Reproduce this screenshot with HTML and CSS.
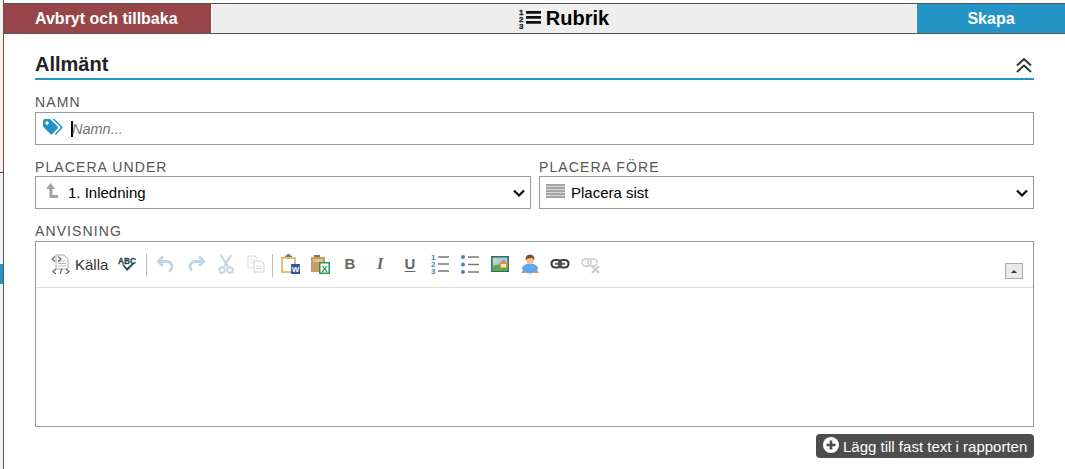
FILE: index.html
```html
<!DOCTYPE html>
<html lang="sv">
<head>
<meta charset="utf-8">
<title>Rubrik</title>
<link rel="stylesheet" href="styles.css">
</head>
<body>
<div class="page">
  <div class="strip">
    <div class="strip-peach"></div>
    <div class="strip-gray"></div>
    <div class="strip-blue"></div>
    <div class="strip-rest"></div>
  </div>
  <main class="main">
    <header class="topbar">
      <button class="top-btn cancel">Avbryt och tillbaka</button>
      <div class="title">
        <svg class="title-icon" width="22" height="22" viewBox="0 0 22 22">
          <text x="0" y="7" class="num heavy">1</text>
          <text x="0" y="14" class="num heavy">2</text>
          <text x="0" y="21" class="num heavy">3</text>
          <path d="M7 3h15v2.700H7zM7 8h15v2.700H7zM7 13h15v2.700H7z" fill="#111"/>
        </svg>
        <span>Rubrik</span>
      </div>
      <button class="top-btn create">Skapa</button>
    </header>
    <div class="content">
      <div class="section-head">
        <h2>Allmänt</h2>
        <svg class="collapse" width="18" height="16" viewBox="0 0 18 16">
          <path d="M2 8.500l7-6.500 7 6.500M2 15l7-6.500 7 6.500" fill="none" stroke="#333" stroke-width="2"/>
        </svg>
      </div>
      <label class="label">NAMN</label>
      <div class="name-field">
        <svg class="tag" width="20" height="17" viewBox="0 0 20 17">
          <path d="M0 1.500Q0 0 1.500 0H7l7.600 7.600q1 1 0 2L9.400 15q-1 1-2 0L0 7.400zM4 2.300a1.700 1.700 0 1 0 .01 0z" fill="#2494c7" fill-rule="evenodd"/>
          <path d="M9.500 0h2l7.600 7.600q1 1 0 2L13.800 15q-1 1-2.200.3L17 9.600q.9-1 0-2z" fill="#2494c7"/>
        </svg>
        <span class="caret"></span>
        <input class="name-input" type="text" placeholder="Namn...">
      </div>
      <div class="two-col">
        <div class="col">
          <label class="label">PLACERA UNDER</label>
          <div class="select-wrap under">
            <svg class="select-icon arrow-icon" width="12" height="15" viewBox="0 0 12 15">
              <path d="M4.500 0L9 6H6.500v6H12v3H3.500V6H0z" fill="#a3a39c"/>
            </svg>
            <select class="select"><option>1. Inledning</option></select>
            <svg class="chevron" width="12" height="8" viewBox="0 0 12 8">
              <path d="M1 1.500l5 5 5-5" fill="none" stroke="#111" stroke-width="2.200"/>
            </svg>
          </div>
        </div>
        <div class="col">
          <label class="label">PLACERA FÖRE</label>
          <div class="select-wrap before">
            <svg class="select-icon lines-icon" width="19" height="14" viewBox="0 0 19 14">
              <path d="M0 0h19v14H0z" fill="#d8d8d8"/>
              <path d="M0 0h19v2H0zM0 3h19v2H0zM0 6h19v2H0zM0 9h19v2H0zM0 12h19v2H0z" fill="#a4a4a4"/>
            </svg>
            <select class="select"><option>Placera sist</option></select>
            <svg class="chevron" width="12" height="8" viewBox="0 0 12 8">
              <path d="M1 1.500l5 5 5-5" fill="none" stroke="#111" stroke-width="2.200"/>
            </svg>
          </div>
        </div>
      </div>
      <label class="label">ANVISNING</label>
      <div class="editor">
        <div class="toolbar">
          <div class="tool-source">
            <svg width="20" height="20" viewBox="0 0 20 20">
              <path d="M5 1h8l4 4v10H5z" fill="#fff" stroke="#aaa"/>
              <path d="M7 7h8M7 9.500h8M7 12h8" stroke="#bbb"/>
              <path d="M4 2.500L1 5l3 2.500M7 2.500l3 2.500-3 2.500M5 15l-3 2.500L5 20M15 15l3 2.500-3 2.500M11 14.500L9 20" fill="none" stroke="#666" stroke-width="1.200"/>
            </svg>
            <span>Källa</span>
          </div>
          <div class="tool">
            <svg class="abc-icon" width="20" height="20" viewBox="0 0 20 20">
              <text x="1" y="9.500" class="abc" textLength="18" lengthAdjust="spacingAndGlyphs">ABC</text>
              <path d="M5 10.500l5 6.500 7-7-1.800-.5-5.200 4.500-3.200-3.500z" fill="#24484a"/>
            </svg>
          </div>
          <span class="sep first"></span>
          <div class="tool">
            <svg width="20" height="20" viewBox="0 0 20 20">
              <path d="M7 2.500L2 7.500 7 12" fill="none" stroke="#bfd4e6" stroke-width="2.600"/>
              <path d="M3 7.500h8a5 5 0 0 1 5 5 6 6 0 0 1-3 5" fill="none" stroke="#bfd4e6" stroke-width="2.800"/>
            </svg>
          </div>
          <div class="tool">
            <svg width="20" height="20" viewBox="0 0 20 20">
              <path d="M13 2.500l5 5L13 12" fill="none" stroke="#bfd4e6" stroke-width="2.600"/>
              <path d="M17 7.500H9a5 5 0 0 0-5 5 6 6 0 0 0 2 4" fill="none" stroke="#bfd4e6" stroke-width="2.800"/>
            </svg>
          </div>
          <div class="tool">
            <svg width="20" height="20" viewBox="0 0 20 20">
              <path d="M5 1l7 12M15 1L8 13" stroke="#cfd6dc" stroke-width="2.400"/>
              <circle cx="6" cy="16" r="2.800" fill="none" stroke="#c3d6e6" stroke-width="1.900"/>
              <circle cx="14" cy="16" r="2.800" fill="none" stroke="#c3d6e6" stroke-width="1.900"/>
            </svg>
          </div>
          <div class="tool">
            <svg width="20" height="20" viewBox="0 0 20 20">
              <path d="M2 2h7l2 2v10H2z" fill="#fff" stroke="#d5dadf"/>
              <path d="M8 7h7l3 3v8H8z" fill="#fff" stroke="#cdd3d9"/>
              <path d="M4 6h4M4 9h3M10 12h6M10 14.500h6" stroke="#d8dde2"/>
            </svg>
          </div>
          <span class="sep second"></span>
          <div class="tool">
            <svg width="20" height="20" viewBox="0 0 20 20">
              <path d="M1 3h15v16H1z" fill="#e6bc7c"/>
              <path d="M3 5h11v12H3z" fill="#fff"/>
              <path d="M5 3h7V1.500H10V0H7v1.500H5z" fill="#7a7a7a"/>
              <path d="M11 10h9v10h-9z" fill="#2c5aa0"/>
              <text x="15.500" y="18" class="mini">W</text>
            </svg>
          </div>
          <div class="tool">
            <svg width="20" height="20" viewBox="0 0 20 20">
              <path d="M1 3h14v15H1z" fill="#c99b62"/>
              <path d="M4 3h6V1H4z" fill="#8c7250"/>
              <path d="M3 5h10v3H3z" fill="#e3c08e"/>
              <path d="M9 8h11v12H9z" fill="#1e9a50"/>
              <path d="M10.500 9.500h8v9h-8z" fill="#fff"/>
              <text x="14.500" y="17.500" class="mini excel">X</text>
            </svg>
          </div>
          <div class="tool"><span class="fmt bold">B</span></div>
          <div class="tool"><span class="fmt italic">I</span></div>
          <div class="tool"><span class="fmt underline">U</span></div>
          <div class="tool">
            <svg width="20" height="22" viewBox="0 0 20 22">
              <text x="1" y="7" class="num blue">1</text>
              <text x="1" y="14" class="num blue">2</text>
              <text x="1" y="21" class="num blue">3</text>
              <path d="M8 4h11M8 11h11M8 18h11" stroke="#777" stroke-width="1.300"/>
            </svg>
          </div>
          <div class="tool">
            <svg width="20" height="20" viewBox="0 0 20 20">
              <circle cx="3" cy="3" r="2" fill="#4d80b8"/>
              <circle cx="3" cy="10.500" r="2" fill="#4d80b8"/>
              <circle cx="3" cy="18" r="2" fill="#4d80b8"/>
              <path d="M8 3h11M8 10.500h11M8 18h11" stroke="#777" stroke-width="1.300"/>
            </svg>
          </div>
          <div class="tool">
            <svg width="20" height="20" viewBox="0 0 20 20">
              <path d="M1 2h18v16H1z" fill="#2e6b62"/>
              <path d="M2.500 3.500h15v13h-15z" fill="#9dcde8"/>
              <path d="M2.500 12q6-3 15 0v4.500h-15z" fill="#5fa844"/>
              <circle cx="5.500" cy="6.500" r="2" fill="#f6d860"/>
              <path d="M9 10l4.500-4.500L18 10v3h-8z" fill="#e8893a"/>
              <path d="M11 10h5v3.500h-5z" fill="#f5ead0"/>
            </svg>
          </div>
          <div class="tool">
            <svg width="20" height="20" viewBox="0 0 20 20">
              <ellipse cx="10" cy="14.500" rx="8" ry="5" fill="#5aa8ee"/>
              <path d="M1 19l2.500-3 2.500 3zM19 19l-2.500-3-2.500 3z" fill="#e58a3c"/>
              <circle cx="10" cy="6" r="4.200" fill="#f2c39a"/>
              <path d="M5.500 6q0-5.500 4.500-5.500T14.500 6q-2.500-2.500-4.500-2t-4.500 2z" fill="#8a4a25"/>
            </svg>
          </div>
          <div class="tool">
            <svg width="20" height="20" viewBox="0 0 20 20">
              <rect x="1.500" y="6" width="9.500" height="7.500" rx="3.700" fill="none" stroke="#3d3d3d" stroke-width="2.200"/>
              <rect x="9" y="6" width="9.500" height="7.500" rx="3.700" fill="none" stroke="#3d3d3d" stroke-width="2.200"/>
              <path d="M5 9.800h10" stroke="#555" stroke-width="1.800"/>
            </svg>
          </div>
          <div class="tool">
            <svg width="20" height="20" viewBox="0 0 20 20">
              <rect x="2" y="5" width="9" height="7" rx="3.300" fill="none" stroke="#d2d2d2" stroke-width="1.800"/>
              <rect x="8" y="5" width="9" height="7" rx="3.300" fill="none" stroke="#d8d8d8" stroke-width="1.800"/>
              <path d="M12 12l7 7M19 12l-7 7" stroke="#cdcdcd" stroke-width="2.200"/>
            </svg>
          </div>
          <button class="tb-collapse"><span class="tri"></span></button>
        </div>
        <div class="editor-body"></div>
      </div>
      <div class="actions">
        <button class="add-btn">
          <svg width="16" height="16" viewBox="0 0 16 16">
            <circle cx="8" cy="8" r="8" fill="#fff"/>
            <path d="M8 3.500v9M3.500 8h9" stroke="#4d4d4d" stroke-width="2.600"/>
          </svg>
          <span>Lägg till fast text i rapporten</span>
        </button>
      </div>
    </div>
  </main>
</div>
</body>
</html>
```

FILE: styles.css
```css
* { box-sizing: border-box; }
html, body { margin: 0; padding: 0; background: #fff; }
body { font-family: "Liberation Sans", Arial, sans-serif; color: #222; overflow: hidden; }
.page { display: flex; height: 469px; }

.strip { width: 3px; display: flex; flex-direction: column; flex: none; }
.strip-peach { height: 173px; background: #fbefe8; border-bottom: 1px solid #444; }
.strip-gray { height: 91px; background: #f1f1f1; }
.strip-blue { height: 20px; background: #2494c7; }
.strip-rest { flex: 1; background: #f1f1f1; }

.main { flex: 1; border-left: 1px solid #555; padding-top: 3px; min-width: 0; }

.topbar { display: flex; height: 31px; border-top: 1px solid #555; border-bottom: 1px solid #555; }
.top-btn { border: 0; color: #fff; font: bold 16px "Liberation Sans", Arial, sans-serif; padding: 0; flex: none; }
.cancel { width: 207px; background: #98454a; text-align: left; padding-left: 31px; }
.create { width: 149px; background: #2494c7; border-left: 1px solid #fff; }
.title { flex: 1; background: #eee; display: flex; align-items: center; justify-content: center; gap: 5px; font-weight: bold; font-size: 20px; color: #000; border-left: 1px solid #fff; }
.title-icon { flex: none; }
.num { font: bold 8px "Liberation Sans", Arial, sans-serif; fill: #222; }
.num.heavy { stroke: #222; stroke-width: 0.3px; }
.num.blue { fill: #4d80b8; font-size: 8px; }

.content { padding: 14px 31px 0; }
.section-head { display: flex; justify-content: space-between; align-items: flex-start; height: 32px; border-bottom: 2px solid #2494c7; }
.section-head h2 { margin: 0; font-size: 20px; line-height: 32px; font-weight: bold; color: #222; }
.collapse { margin: 9px 1px 0 0; }

.label { display: block; font-size: 14px; line-height: 15px; letter-spacing: 1.100px; color: #555; }
.section-head + .label { margin-top: 15px; margin-bottom: 2px; }

.name-field { display: flex; align-items: center; height: 33px; border: 1px solid #999; padding-left: 7px; }
.tag { flex: none; margin-bottom: 3px; }
.caret { flex: none; width: 2px; height: 16px; background: #000; margin-left: 8px; }
.name-input { flex: 1; min-width: 0; border: 0; outline: 0; padding: 0; margin-left: -1px; font: italic 14.500px "Liberation Sans", Arial, sans-serif; background: transparent; color: #222; }
.name-input::placeholder { color: #777; opacity: 1; }

.two-col { display: grid; grid-template-columns: 496px 495px; gap: 8px; margin-top: 15px; }
.col .label { margin-bottom: 1px; }
.select-wrap { position: relative; height: 33px; }
.select { display: block; width: 100%; height: 33px; border: 1px solid #999; border-radius: 0; background: #fff; font: 15px "Liberation Sans", Arial, sans-serif; color: #000; outline: 0; appearance: none; }
.under .select { padding-left: 32px; }
.before .select { padding-left: 31px; }
.select-icon { position: absolute; }
.arrow-icon { left: 11px; top: 7px; z-index: 1; }
.lines-icon { left: 7px; top: 8px; z-index: 1; }
.chevron { position: absolute; right: 6px; top: 13px; pointer-events: none; }

.two-col + .label { margin-top: 15px; margin-bottom: 2px; }

.editor { border: 1px solid #999; height: 186px; display: flex; flex-direction: column; }
.toolbar { position: relative; display: flex; align-items: flex-start; height: 46px; padding: 12px 0 0 15px; border-bottom: 1px solid #ddd; flex: none; }
.tool-source { display: flex; align-items: center; gap: 4px; height: 20px; width: 62px; font-size: 15px; color: #333; flex: none; }
.tool-source svg, .tool svg { flex: none; }
.tool { width: 30px; height: 20px; flex: none; display: flex; align-items: center; justify-content: center; }
.tool-source + .tool { width: 28px; }
.abc-icon { overflow: visible; }
.sep { flex: none; width: 1px; height: 23px; background: #bbb; }
.sep.first { margin: 0 4px 0 5px; }
.sep.second { margin: 0 2px 0 1px; }
.abc { font: bold 9.500px "Liberation Sans", Arial, sans-serif; fill: #24484a; stroke: #24484a; stroke-width: 0.3px; }
.mini { font: bold 8px "Liberation Sans", Arial, sans-serif; fill: #fff; text-anchor: middle; }
.mini.excel { fill: #1e9a50; font-size: 9px; }
.fmt { font-size: 15px; line-height: 20px; color: #666; font-weight: bold; font-family: "Liberation Sans", Arial, sans-serif; }
.fmt.italic { font-style: italic; font-family: "Liberation Serif", serif; font-size: 16px; }
.fmt.underline { text-decoration: underline; text-underline-offset: 2px; }
.tb-collapse { position: absolute; right: 10px; top: 21px; width: 18px; height: 16px; padding: 0; background: #e9e9e9; border: 1px solid #aaa; display: flex; align-items: center; justify-content: center; }
.tri { width: 0; height: 0; border-left: 3px solid transparent; border-right: 3px solid transparent; border-bottom: 3px solid #333; }
.editor-body { flex: 1; }

.actions { display: flex; justify-content: flex-end; margin-top: 7px; }
.add-btn { display: flex; align-items: center; gap: 4px; height: 24px; width: 218px; padding: 0 0 0 7px; border: 0; border-radius: 4px; background: #4d4d4d; color: #fff; font: 15px "Liberation Sans", Arial, sans-serif; white-space: nowrap; }
.add-btn svg { flex: none; margin-bottom: 2px; }
```
